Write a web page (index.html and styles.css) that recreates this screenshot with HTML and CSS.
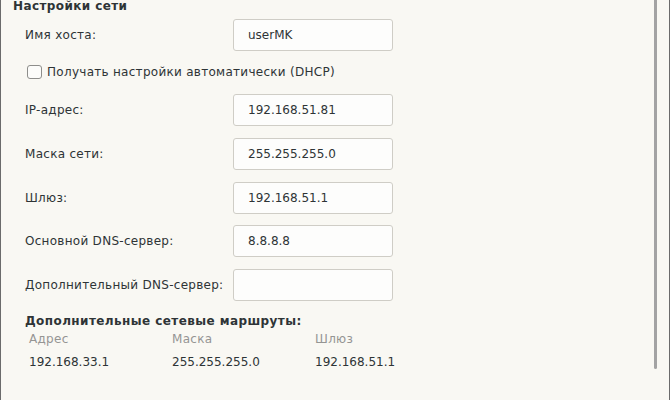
FILE: index.html
```
<!DOCTYPE html>
<html lang="ru">
<head>
<meta charset="utf-8">
<link rel="stylesheet" href="styles.css">
</head>
<body>
<div class="panel">
  <div class="content">
    <div class="title">Настройки сети</div>
    <div class="row first">
      <div class="label">Имя хоста:</div>
      <div class="entry">userMK</div>
    </div>
    <label class="check">
      <span class="box"></span>
      <span class="check-text">Получать настройки автоматически (DHCP)</span>
    </label>
    <div class="fields">
      <div class="row">
        <div class="label">IP-адрес:</div>
        <div class="entry">192.168.51.81</div>
      </div>
      <div class="row">
        <div class="label">Маска сети:</div>
        <div class="entry">255.255.255.0</div>
      </div>
      <div class="row">
        <div class="label">Шлюз:</div>
        <div class="entry">192.168.51.1</div>
      </div>
      <div class="row">
        <div class="label">Основной DNS-сервер:</div>
        <div class="entry">8.8.8.8</div>
      </div>
      <div class="row">
        <div class="label">Дополнительный DNS-сервер:</div>
        <div class="entry"></div>
      </div>
    </div>
    <div class="routes-title">Дополнительные сетевые маршруты:</div>
    <div class="routes">
      <div class="col-head">Адрес</div>
      <div class="col-head">Маска</div>
      <div class="col-head">Шлюз</div>
      <div class="cell">192.168.33.1</div>
      <div class="cell">255.255.255.0</div>
      <div class="cell">192.168.51.1</div>
    </div>
  </div>
  <div class="scrollbar"></div>
</div>
</body>
</html>
```
FILE: styles.css
```
html, body {
  margin: 0;
  padding: 0;
}
body {
  width: 670px;
  height: 400px;
  overflow: hidden;
  font-family: "DejaVu Sans", "Noto Sans", sans-serif;
  font-size: 12px;
  color: #2e3436;
}
.panel {
  position: relative;
  box-sizing: border-box;
  width: 670px;
  height: 400px;
  background: #f9f8f3;
  border-left: 1px solid #6b6b6b;
  border-right: 1px solid #6b6b6b;
}
.content {
  display: flex;
  flex-direction: column;
  padding-left: 12px;
}
.title {
  font-weight: bold;
  font-size: 12px;
  line-height: 14px;
  margin-top: -1px;
  letter-spacing: 0.4px;
}
.row {
  display: flex;
  align-items: center;
  height: 32px;
  padding-left: 12px;
}
.row.first {
  margin-top: 6px;
}
.label {
  width: 208px;
  line-height: 14px;
  letter-spacing: 0.28px;
}
.entry {
  box-sizing: border-box;
  width: 160px;
  height: 32px;
  padding-left: 14px;
  line-height: 30px;
  background: #fdfdfc;
  border: 1px solid #cfcdc6;
  border-radius: 3px;
}
.check {
  display: flex;
  align-items: center;
  height: 14px;
  margin: 14px 0 15px 14px;
}
.box {
  box-sizing: border-box;
  width: 15px;
  height: 14px;
  border: 1px solid #8e8e8b;
  border-radius: 3px;
  background: #fcfcfa;
}
.check-text {
  margin-left: 5px;
  line-height: 14px;
  letter-spacing: 0.28px;
}
.fields {
  display: flex;
  flex-direction: column;
  gap: 11.75px;
}
.routes-title {
  font-weight: bold;
  line-height: 14px;
  margin-top: 13px;
  padding-left: 12px;
  letter-spacing: 0.42px;
}
.routes {
  display: grid;
  grid-template-columns: 143px 143px 142px;
  grid-auto-rows: 14px;
  row-gap: 9px;
  padding-left: 16px;
  margin-top: 4px;
  line-height: 14px;
}
.col-head {
  color: #959593;
  letter-spacing: 0.3px;
}
.scrollbar {
  position: absolute;
  top: 0;
  left: 653px;
  width: 3px;
  height: 369px;
  background: #a3a3a3;
  border-radius: 0 0 2px 2px;
}
```
